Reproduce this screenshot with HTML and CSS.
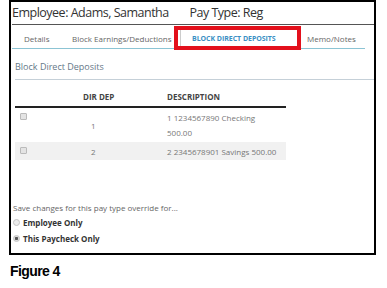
FILE: index.html
```html
<!DOCTYPE html>
<html lang="en">
<head>
    <meta charset="UTF-8">
    <title>Block Direct Deposits</title>
    <link rel="stylesheet" href="styles.css">
</head>
<body>
    <div class="frame">
        <div class="head">
            <span>Employee: Adams, Samantha</span>
            <span class="pay-type">Pay Type: Reg</span>
        </div>
        <div class="tabs">
            <span class="tab tab-details">Details</span>
            <span class="tab tab-earn">Block Earnings/Deductions</span>
            <span class="tab tab-active">BLOCK DIRECT DEPOSITS</span>
            <span class="tab tab-memo">Memo/Notes</span>
        </div>
        <h2 class="section">Block Direct Deposits</h2>
        <table class="grid">
            <thead>
                <tr>
                    <th class="col-check"></th>
                    <th class="col-dir">DIR DEP</th>
                    <th class="col-desc">DESCRIPTION</th>
                </tr>
            </thead>
            <tbody>
                <tr>
                    <td class="col-check"><span class="box"></span></td>
                    <td class="col-dir">1</td>
                    <td class="col-desc">1 1234567890 Checking<br>500.00</td>
                </tr>
                <tr class="alt">
                    <td class="col-check"><span class="box"></span></td>
                    <td class="col-dir">2</td>
                    <td class="col-desc">2 2345678901 Savings 500.00</td>
                </tr>
            </tbody>
        </table>
        <p class="save-note">Save changes for this pay type override for...</p>
        <div class="choice"><span class="radio"></span>Employee Only</div>
        <div class="choice"><span class="radio checked"></span>This Paycheck Only</div>
    </div>
    <p class="caption">Figure 4</p>
</body>
</html>
```

FILE: styles.css
```css
body {
    margin: 0;
    background: #fff;
    font-family: "Open Sans", sans-serif;
    color: #555;
}
.frame {
    margin-left: 9px;
    width: 363px;
    height: 251px;
    border: 2px solid #000;
}
.head {
    height: 22px;
    margin-left: 1px;
    border-bottom: 1px solid #555;
    font-size: 12.5px;
    letter-spacing: -0.5px;
    line-height: 22px;
    color: #333;
    white-space: nowrap;
}
.pay-type {
    margin-left: 18px;
}
.tabs {
    display: flex;
    height: 23px;
    width: 353px;
    margin-left: 1px;
    border-bottom: 1px solid #8cc4d4;
    font-size: 8px;
    color: #666;
    white-space: nowrap;
}
.tab {
    line-height: 12px;
    padding-top: 8px;
}
.tab-details {
    width: 48px;
    padding-left: 12px;
}
.tab-earn {
    width: 108px;
}
.tab-active {
    position: relative;
    width: 105px;
    margin-top: 2px;
    padding-top: 6px;
    padding-left: 11px;
    border-left: 1px solid #ccc;
    color: #3b8fc4;
    font-weight: bold;
    font-size: 7px;
    letter-spacing: -0.05px;
}
.tab-active::after {
    content: "";
    position: absolute;
    left: -7px;
    top: -1px;
    width: 119px;
    height: 16px;
    border: 4px solid #e3101c;
}
.tab-memo {
    margin-left: 10px;
}
.section {
    margin: 11px 0 0 4px;
    padding-bottom: 5px;
    border-bottom: 1px solid #c5d0d8;
    font-size: 9px;
    font-weight: normal;
    line-height: 14px;
    color: #667888;
}
.grid {
    margin: 10px 0 0 4px;
    border-collapse: collapse;
    width: 271px;
    font-size: 8px;
    color: #777;
}
.grid th {
    padding: 0 0 2px;
    line-height: 14px;
    text-align: left;
    color: #444;
    border-bottom: 2px solid #222;
}
.grid td {
    padding: 2px 0;
    line-height: 15px;
}
.grid .col-check {
    width: 63px;
    padding-left: 5px;
}
.grid td.col-check {
    vertical-align: top;
    padding-top: 5px;
    line-height: 0;
}
.col-dir {
    width: 84px;
}
.grid td.col-dir {
    padding-left: 8px;
    width: 76px;
}
.alt td {
    background: #f1f1f1;
    padding: 2px 0 1px;
}
.box {
    display: inline-block;
    width: 5px;
    height: 5px;
    border: 1px solid #bbb;
    border-radius: 1px;
    background: #e4e4e4;
}
.save-note {
    margin: 42px 0 0 2px;
    font-size: 8px;
    line-height: 12px;
    color: #666;
}
.choice {
    display: flex;
    align-items: center;
    height: 16px;
    margin-left: 2px;
    font-size: 8px;
    font-weight: bold;
    color: #333;
}
.radio {
    width: 5px;
    height: 5px;
    margin-right: 3px;
    border: 1px solid #c4c4c4;
    border-radius: 50%;
    background: #ececec;
}
.radio.checked {
    background: radial-gradient(circle, #555 0 1.3px, #ddd 2px);
}
.caption {
    margin: 8px 0 0 10px;
    font-family: "Liberation Sans", sans-serif;
    font-weight: bold;
    font-size: 14px;
    letter-spacing: -0.6px;
    line-height: 16px;
    color: #000;
}
```
